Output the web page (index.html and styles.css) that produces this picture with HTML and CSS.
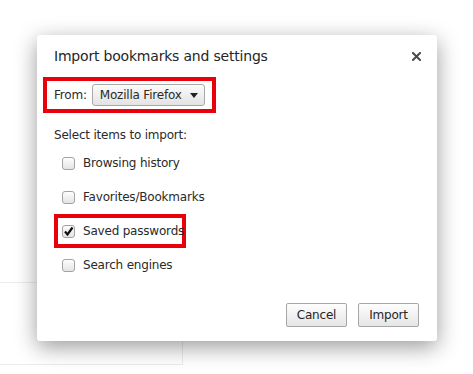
FILE: index.html
```html
<!DOCTYPE html>
<html lang="en">
<head>
  <meta charset="UTF-8">
  <title>Import bookmarks and settings</title>
  <link rel="stylesheet" href="styles.css">
</head>
<body>

  <!-- faint page content behind the dialog -->
  <div class="page-box"></div>

  <div class="dialog">
    <div class="dialog-header">
      <div class="dialog-title">Import bookmarks and settings</div>
      <span class="close-btn">
        <svg width="9" height="9" viewBox="0 0 9 9">
          <path d="M1 1 L8 8 M8 1 L1 8" stroke="#4a4a4a" stroke-width="2" stroke-linecap="square"/>
        </svg>
      </span>
    </div>

    <div class="from-row highlight">
      <span class="from-label">From:</span>
      <span class="dropdown">Mozilla Firefox <span class="arrow"></span></span>
    </div>

    <div class="select-label">Select items to import:</div>

    <div class="items">
      <div class="item">
        <span class="check"></span>
        <span>Browsing history</span>
      </div>
      <div class="item">
        <span class="check"></span>
        <span>Favorites/Bookmarks</span>
      </div>
      <div class="item highlight">
        <span class="check checked">
          <svg width="11" height="11" viewBox="0 0 11 11">
            <path d="M2 5.5 L4.5 8.5 L9.5 1.5" fill="none" stroke="#111" stroke-width="2.2"/>
          </svg>
        </span>
        <span>Saved passwords</span>
      </div>
      <div class="item">
        <span class="check"></span>
        <span>Search engines</span>
      </div>
    </div>

    <div class="dialog-buttons">
      <button class="btn">Cancel</button>
      <button class="btn">Import</button>
    </div>
  </div>

</body>
</html>
```

FILE: styles.css
```css
body, html {
  margin: 0;
  height: 100%;
  background: #fff;
  font-family: "DejaVu Sans", sans-serif;
  font-size: 12px;
  letter-spacing: -0.2px;
  color: #2a2a2a;
}

.page-box {
  margin-top: 282px;
  width: 182px;
  height: 81px;
  border-top: 1px solid #ececec;
  border-right: 1px solid #ececec;
  border-bottom: 1px solid #ececec;
}

.dialog {
  position: absolute;
  left: 37px;
  top: 35px;
  width: 400px;
  height: 306px;
  box-sizing: border-box;
  background: #fff;
  border-radius: 3px;
  box-shadow: 0 6px 22px rgba(0, 0, 0, 0.4);
  display: flex;
  flex-direction: column;
}

.dialog-header {
  display: flex;
  align-items: center;
  justify-content: space-between;
  height: 42px;
  padding: 0 17px;
}

.dialog-title {
  font-size: 14px;
  color: #262626;
}

.close-btn {
  display: flex;
  margin-right: -1px;
}

.highlight {
  border: 4px solid #e8000b;
  box-sizing: border-box;
}

.from-row {
  display: flex;
  align-items: center;
  width: 173px;
  height: 36px;
  margin-left: 6px;
  padding-left: 7px;
  white-space: nowrap;
}

.from-label {
  margin-right: 5px;
}

.dropdown {
  display: flex;
  align-items: center;
  height: 22px;
  box-sizing: border-box;
  padding: 0 6px 0 7px;
  border: 1px solid #a9a9a9;
  border-radius: 3px;
  background: linear-gradient(#fbfbfb, #e3e3e3);
}

.arrow {
  width: 0;
  height: 0;
  margin-left: 8px;
  border-left: 4px solid transparent;
  border-right: 4px solid transparent;
  border-top: 5px solid #222;
}

.select-label {
  margin: 15px 0 0 17px;
  height: 17px;
}

.items {
  display: flex;
  flex-direction: column;
  margin-top: 1px;
  margin-left: 17px;
}

.item {
  display: flex;
  align-items: center;
  height: 34px;
  padding-left: 8px;
  white-space: nowrap;
}

.item.highlight {
  width: 132px;
  padding-left: 4px;
}

.check {
  display: flex;
  flex-shrink: 0;
  align-items: center;
  justify-content: center;
  width: 13px;
  height: 13px;
  box-sizing: border-box;
  margin-right: 8px;
  border: 1px solid #a3a3a3;
  border-radius: 3px;
  background: linear-gradient(#fdfdfd, #e4e4e4);
}

.dialog-buttons {
  display: flex;
  justify-content: flex-end;
  gap: 11px;
  margin-top: auto;
  padding: 0 18px 14px 0;
}

.btn {
  width: 61px;
  height: 24px;
  font-family: inherit;
  font-size: 12px;
  letter-spacing: inherit;
  color: #262626;
  border: 1px solid #a6a6a6;
  border-radius: 2px;
  background: linear-gradient(#fefefe, #e5e5e5);
  padding: 0;
}
```
